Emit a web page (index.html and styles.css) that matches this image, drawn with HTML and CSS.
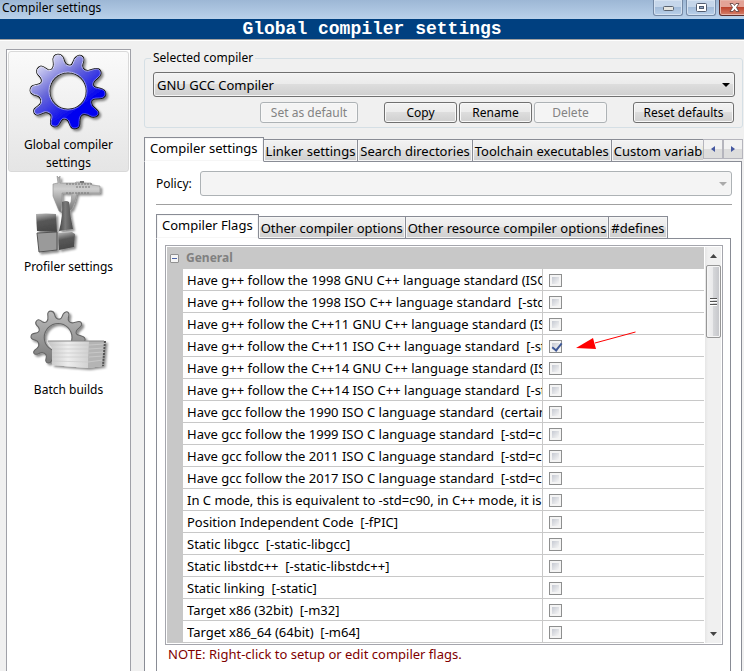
FILE: index.html
```html
<!DOCTYPE html>
<html lang="en">
<head>
<meta charset="utf-8">
<title>Compiler settings</title>
<link rel="stylesheet" href="styles.css">
</head>
<body>
<header class="titlebar">
  <span class="titlebar-text">Compiler settings</span>
  <div class="window-buttons">
    <button class="win" type="button" aria-label="Minimize"><svg width="11" height="7" viewBox="0 0 11 7"><rect x=".5" y="2.5" width="10" height="4" rx="1" fill="#e5e5e0" stroke="#59626f"/></svg></button>
    <button class="win" type="button" aria-label="Maximize"><svg width="11" height="9" viewBox="0 0 11 9"><rect x=".5" y=".5" width="10" height="8" rx="1" fill="#fff" stroke="#525d70"/><rect x="3.5" y="3.5" width="4" height="2" fill="#8fa6c4" stroke="#525d70"/></svg></button>
    <button class="win win-close" type="button" aria-label="Close"><svg width="11" height="9" viewBox="0 0 11 9"><path d="M1 .5h3l1.500 2L7 .5h3L7.500 4.500 10 8.500H7L5.500 6.500 4 8.500H1l2.500-4z" fill="#fff" stroke="#5b3a3a" stroke-width=".8"/></svg></button>
  </div>
</header>
<h1 class="banner">Global compiler settings</h1>
<div class="content">
  <nav class="sidebar">
    <a class="side-item selected" href="#global">
      <svg class="side-icon" width="90" height="84" viewBox="0 4 90 84">
        <defs>
          <linearGradient id="blue" x1=".15" y1=".1" x2=".65" y2=".75"><stop offset="0" stop-color="#dcdcf4"/><stop offset=".45" stop-color="#6a6ad8"/><stop offset="1" stop-color="#0000f0"/></linearGradient>
          <linearGradient id="rim" x1="0" y1="0" x2=".8" y2=".8"><stop offset="0" stop-color="#fff"/><stop offset=".5" stop-color="#c4c4f2"/><stop offset="1" stop-color="#4a4af0"/></linearGradient>
          <path id="cog" d="M30 14C29 9 31 7 34 7S38 8 39 11C40 16 43 18 46 18S49 15 51 11C53 8 56 7 58 9S59 13 58 16C57 20 60 24 65 23C69 22 73 20 75 22S77 27 73 30C69 33 68 36 69 38S72 40 76 41C80 42 81 43 81 46S78 50 74 50C68 50 66 52 67 56C68 60 74 62 74 65S70 69 67 68C62 65 59 65 57 67S55 73 55 76S53 80 50 80S46 76 45 73C43 70 39 69 37 72C35 75 34 79 30 78S27 74 28 69C28 65 23 63 20 64S13 68 11 65S12 60 15 58C20 54 17 48 13 47C8 46 6 44 7 41S9 38 14 37C19 36 19 32 17 29C14 26 12 24 14 21S18 18 23 22C27 24 31 21 30 14ZM44 24A19 19 0 1 0 44 62A19 19 0 1 0 44 24Z"/>
          <filter id="drop" x="-10%" y="-10%" width="130%" height="130%"><feDropShadow dx="2" dy="2" stdDeviation="1" flood-opacity=".45"/></filter>
        </defs>
        <g filter="url(#drop)" fill-rule="evenodd"><use href="#cog" fill="#111" stroke="#111" stroke-width="2.500"/><use href="#cog" fill="url(#blue)" stroke="url(#rim)"/></g>
      </svg>
      <span>Global compiler settings</span>
    </a>
    <a class="side-item" href="#profiler">
      <svg class="side-icon" width="90" height="86" viewBox="0 0 90 86">
        <defs>
          <linearGradient id="dark" x1=".3" y1="0" x2=".5" y2="1"><stop offset="0" stop-color="#b0b0b0"/><stop offset=".4" stop-color="#585858"/><stop offset="1" stop-color="#484848"/></linearGradient>
          <linearGradient id="steel" x1="0" y1="0" x2="0" y2="1"><stop offset="0" stop-color="#a5a5a5"/><stop offset=".35" stop-color="#cfcfcf"/><stop offset="1" stop-color="#6c6c6c"/></linearGradient>
          <linearGradient id="cone"><stop offset="0" stop-color="#444"/><stop offset=".45" stop-color="#7a7a7a"/><stop offset="1" stop-color="#4a4a4a"/></linearGradient>
        </defs>
        <g filter="url(#drop)">
          <path d="M33 4l2 2 1-2v7h15l1-1h6v1h9l1 2 8 1v7H53l-2 8-3 8-3 2-1-3 3-6 1-9H38v7l-1 10 1 3-3-2-4-10-2-5V12l5-1z" fill="url(#steel)" stroke="#8d8d8d" stroke-width=".6"/>
          <path d="M42 12h26M52 15h15M42 21h24" stroke="#777" stroke-dasharray="2 1"/>
          <path d="M56 9h4v2h-4z" fill="#777"/>
          <path d="M38 30q4-2 7 0 1 14 4 27l-14 2q4-15 3-29z" fill="url(#cone)"/>
          <path d="M12 42q10-1 20 0l1 18-20-1z" fill="url(#dark)"/>
          <path d="M13 61l20-1v18l-18 2z" fill="#9a9a9a" stroke="#555"/>
          <path d="M34 61l14-1 3 2-1 13-15 3z" fill="url(#dark)"/>
        </g>
      </svg>
      <span>Profiler settings</span>
    </a>
    <a class="side-item" href="#batch">
      <svg class="side-icon" width="90" height="86" viewBox="0 0 90 86">
        <defs>
          <linearGradient id="gray" x1="0" y1="0" x2="0" y2="1"><stop offset="0" stop-color="#bbb"/><stop offset="1" stop-color="#777"/></linearGradient>
          <linearGradient id="paper"><stop offset="0" stop-color="#c4c4c4"/><stop offset=".5" stop-color="#ededed"/><stop offset="1" stop-color="#d0d0d0"/></linearGradient>
        </defs>
        <g filter="url(#drop)">
          <g transform="translate(2 11) scale(.73)"><use href="#cog" fill="url(#gray)" fill-rule="evenodd" stroke="#666" stroke-width="1.500"/></g>
          <path d="M23 46h42l-1 27-36-3V53z" fill="url(#paper)"/>
          <path d="M65 46h16l-3 25-14 2z" fill="#b4b4b4"/>
          <path d="M24 46h56" stroke="#888"/>
          <path d="M26 50h39M28 54h37M28 58h37M28 62h36M28 66l36 1" stroke="#c8c8c8" stroke-width=".6"/>
          <path d="M65 50l16-1M65 54l15-1M65 58l15-1M65 62l14-1M64 67l15-2" stroke="#d0d0d0" stroke-width=".7"/>
          <path d="M81 46l-2 25" stroke="#555" stroke-width="2" stroke-dasharray="2 1"/>
        </g>
      </svg>
      <span>Batch builds</span>
    </a>
  </nav>
  <main class="main">
    <fieldset class="compiler-box">
      <legend><label for="compiler">Selected compiler</label></legend>
      <div class="select-wrap"><select id="compiler" class="select"><option>GNU GCC Compiler</option></select></div>
      <div class="button-row">
        <button class="btn btn-wide" type="button" disabled>Set as default</button>
        <div class="btn-group">
          <button class="btn" type="button">Copy</button>
          <button class="btn" type="button">Rename</button>
          <button class="btn" type="button" disabled>Delete</button>
        </div>
        <button class="btn btn-reset" type="button">Reset defaults</button>
      </div>
    </fieldset>
    <section class="book">
      <div class="tabbar">
        <div class="tabs" role="tablist">
          <button class="tab active" type="button" role="tab" aria-selected="true">Compiler settings</button>
          <button class="tab" type="button" role="tab">Linker settings</button>
          <button class="tab" type="button" role="tab">Search directories</button>
          <button class="tab" type="button" role="tab">Toolchain executables</button>
          <button class="tab" type="button" role="tab">Custom variables</button>
        </div>
        <div class="tab-scroll">
          <button type="button" aria-label="Scroll tabs left"><svg width="4" height="6" viewBox="0 0 4 6"><path d="M4 0v6L0 3z" fill="#4558a0"/></svg></button>
          <button type="button" aria-label="Scroll tabs right"><svg width="4" height="6" viewBox="0 0 4 6"><path d="M0 0v6l4-3z" fill="#4558a0"/></svg></button>
        </div>
      </div>
      <div class="panel outer-panel">
        <div class="policy-row">
          <label for="policy">Policy:</label>
          <div class="select-wrap off"><select id="policy" class="select" disabled><option></option></select></div>
        </div>
        <hr class="rule">
        <section class="book">
          <div class="tabbar">
            <div class="tabs" role="tablist">
              <button class="tab active" type="button" role="tab" aria-selected="true">Compiler Flags</button>
              <button class="tab" type="button" role="tab">Other compiler options</button>
              <button class="tab" type="button" role="tab">Other resource compiler options</button>
              <button class="tab" type="button" role="tab">#defines</button>
            </div>
          </div>
          <div class="panel inner-panel">
            <div class="grid-box">
              <table class="flags">
                <colgroup><col class="c-margin"><col class="c-name"><col></colgroup>
                <thead><tr><th><button class="collapse" type="button" aria-label="Collapse General"></button></th><th colspan="2">General</th></tr></thead>
                <tbody>
                  <tr><td></td><td><label for="f1">Have g++ follow the 1998 GNU C++ language standard (ISO C++ plus GNU extensions)</label></td><td><input type="checkbox" id="f1"></td></tr>
                  <tr><td></td><td><label for="f2">Have g++ follow the 1998 ISO C++ language standard&nbsp; [-std=c++98]</label></td><td><input type="checkbox" id="f2"></td></tr>
                  <tr><td></td><td><label for="f3">Have g++ follow the C++11 GNU C++ language standard (ISO C++ plus GNU extensions)</label></td><td><input type="checkbox" id="f3"></td></tr>
                  <tr><td></td><td><label for="f4">Have g++ follow the C++11 ISO C++ language standard&nbsp; [-std=c++11]</label></td><td class="marked"><input type="checkbox" id="f4" checked><svg class="pointer" width="62" height="20" viewBox="0 0 62 20"><path d="M60.500 2L20 13" stroke="#f00" fill="none"/><path d="M1 18L18 8l3 11z" fill="#f00"/></svg></td></tr>
                  <tr><td></td><td><label for="f5">Have g++ follow the C++14 GNU C++ language standard (ISO C++ plus GNU extensions)</label></td><td><input type="checkbox" id="f5"></td></tr>
                  <tr><td></td><td><label for="f6">Have g++ follow the C++14 ISO C++ language standard&nbsp; [-std=c++14]</label></td><td><input type="checkbox" id="f6"></td></tr>
                  <tr><td></td><td><label for="f7">Have gcc follow the 1990 ISO C language standard&nbsp; (certain GNU extensions)</label></td><td><input type="checkbox" id="f7"></td></tr>
                  <tr><td></td><td><label for="f8">Have gcc follow the 1999 ISO C language standard&nbsp; [-std=c99]</label></td><td><input type="checkbox" id="f8"></td></tr>
                  <tr><td></td><td><label for="f9">Have gcc follow the 2011 ISO C language standard&nbsp; [-std=c11]</label></td><td><input type="checkbox" id="f9"></td></tr>
                  <tr><td></td><td><label for="f10">Have gcc follow the 2017 ISO C language standard&nbsp; [-std=c17]</label></td><td><input type="checkbox" id="f10"></td></tr>
                  <tr><td></td><td><label for="f11">In C mode, this is equivalent to -std=c90, in C++ mode, it is equivalent to -std=c++98</label></td><td><input type="checkbox" id="f11"></td></tr>
                  <tr><td></td><td><label for="f12">Position Independent Code&nbsp; [-fPIC]</label></td><td><input type="checkbox" id="f12"></td></tr>
                  <tr><td></td><td><label for="f13">Static libgcc&nbsp; [-static-libgcc]</label></td><td><input type="checkbox" id="f13"></td></tr>
                  <tr><td></td><td><label for="f14">Static libstdc++&nbsp; [-static-libstdc++]</label></td><td><input type="checkbox" id="f14"></td></tr>
                  <tr><td></td><td><label for="f15">Static linking&nbsp; [-static]</label></td><td><input type="checkbox" id="f15"></td></tr>
                  <tr><td></td><td><label for="f16">Target x86 (32bit)&nbsp; [-m32]</label></td><td><input type="checkbox" id="f16"></td></tr>
                  <tr><td></td><td><label for="f17">Target x86_64 (64bit)&nbsp; [-m64]</label></td><td><input type="checkbox" id="f17"></td></tr>
                </tbody>
              </table>
              <div class="scrollbar" aria-hidden="true">
                <svg width="7" height="4" viewBox="0 0 7 4"><path d="M0 4l3.500-4L7 4z" fill="#444"/></svg>
                <div class="thumb"><i></i><i></i><i></i></div>
                <svg width="7" height="4" viewBox="0 0 7 4"><path d="M0 0l3.500 4L7 0z" fill="#444"/></svg>
              </div>
            </div>
            <p class="note">NOTE: Right-click to setup or edit compiler flags.</p>
          </div>
        </section>
      </div>
    </section>
  </main>
</div>
</body>
</html>
```
FILE: styles.css
```css
* { box-sizing: border-box; }
body {
  margin: 0;
  height: 100vh;
  overflow: hidden;
  display: flex;
  flex-direction: column;
  background: #f0f0f0;
  color: #000;
  font: 12px/18px "Noto Sans", "Open Sans", sans-serif;
}
button, select { font: inherit; color: inherit; margin: 0; }
.titlebar {
  display: flex;
  justify-content: space-between;
  height: 19px;
  background: linear-gradient(#9db7d5, #b9d1ea);
  flex: none;
}
.titlebar-text { padding-left: 2px; line-height: 16px; }
.window-buttons { display: flex; gap: 3px; height: 16px; margin-right: -5px; }
.win {
  width: 30px;
  padding: 0;
  border: 1px solid #7489a5;
  border-top: 0;
  border-radius: 0 0 3px 3px;
  background: linear-gradient(#c5d6ea 0 45%, #a3bcd9 50%, #b9d0ea);
  box-shadow: inset 0 0 0 1px #d5e2f1;
  display: flex;
  align-items: center;
  justify-content: center;
}
.win-close { border-color: #5c2d2d; background: linear-gradient(#e3a397 0 45%, #bd452f 50%, #d5806b); box-shadow: inset 0 0 0 1px #e6b3a8; }
.banner {
  margin: 0;
  flex: none;
  height: 21px;
  border-bottom: 1px solid #a0a0a0;
  background: #004080;
  color: #fff;
  text-align: center;
  font: bold 18px/20px "Liberation Mono", monospace;
}
.content { flex: 1; min-height: 0; display: flex; gap: 13px; padding: 8px 1px 0 6px; border-top: 1px solid #fff; }
.sidebar {
  flex: none;
  width: 125px;
  padding: 1px;
  border: 1px solid #a0a1a8;
  border-bottom: 0;
  background: #fff;
}
.side-item {
  display: flex;
  flex-direction: column;
  align-items: center;
  height: 123px;
  padding: 0 10px;
  color: #000;
  text-align: center;
  text-decoration: none;
  line-height: 18px;
}
.side-item.selected { height: 121px; border: 1px solid #d9d9d9; border-radius: 3px; background: linear-gradient(#fafafa, #e5e5e5); }
.side-icon { flex: none; }
.main { flex: 1; min-width: 0; display: flex; flex-direction: column; }
.compiler-box {
  margin: 0 0 9px;
  padding: 5px 7px 4px 8px;
  border: 1px solid #d5dfe5;
  border-radius: 3px;
  min-width: 0;
}
.compiler-box legend { padding: 0 2px; margin-left: -2px; }
.select-wrap { display: grid; align-items: center; flex: 1; }
.select-wrap::after {
  content: "";
  grid-area: 1 / 1;
  justify-self: end;
  margin-right: 5px;
  border: 4px solid transparent;
  border-top-color: #000;
  border-bottom: 0;
  pointer-events: none;
}
.select-wrap.off::after { border-top-color: #aaa; }
.select {
  grid-area: 1 / 1;
  appearance: none;
  width: 100%;
  height: 25px;
  padding: 0 3px;
  border: 1px solid #707070;
  border-radius: 3px;
  background: linear-gradient(#f2f2f2, #ebebeb 49%, #dddddd 50%, #cfcfcf);
  box-shadow: inset 0 0 0 1px #f5f5f5;
  font-size: 13px;
}
.select:disabled { border-color: #adb2b5; background: #f4f4f4; opacity: 1; }
.button-row { display: flex; justify-content: flex-end; gap: 26px; padding: 5px 1px 0 0; }
.btn-group { display: flex; gap: 2px; }
.btn {
  width: 73px;
  height: 21px;
  padding: 0;
  line-height: 18px;
  border: 1px solid #707070;
  border-radius: 3px;
  background: linear-gradient(#f2f2f2, #ebebeb 49%, #dddddd 50%, #cfcfcf);
  box-shadow: inset 0 0 0 1px #f8f8f8;
}
.btn:disabled { color: #838383; border-color: #adb2b5; background: #f4f4f4; }
.btn-wide { width: 98px; }
.btn-reset { width: 101px; }
.book { flex: 1; display: flex; flex-direction: column; min-height: 0; }
.tabbar { display: flex; flex: none; }
.tabs { display: flex; align-items: flex-end; overflow: hidden; flex: 1; position: relative; margin-bottom: -1px; }
.tab {
  flex: none;
  height: 23px;
  padding: 0 2px;
  border: 1px solid #898c95;
  border-left-width: 0;
  background: linear-gradient(#f2f2f2, #ebebeb 49%, #dddddd 50%, #cfcfcf);
  box-shadow: inset 0 0 0 1px #f6f6f6;
  font-size: 13px;
  line-height: 20px;
}
.tab.active { height: 25px; padding: 0 5px 3px; border-left-width: 1px; border-bottom-color: #fff; background: #fff; }
.tab-scroll { flex: none; display: flex; align-items: flex-start; padding-top: 2px; }
.tab-scroll button {
  width: 20px;
  height: 20px;
  padding: 0;
  border: 1px solid #b5b5bd;
  background: linear-gradient(#f2f2f2 49%, #dddddd 50%);
  display: flex;
  align-items: center;
  justify-content: center;
}
.panel { flex: 1; min-height: 0; border: 1px solid #898c95; border-bottom: 0; background: #fff; }
.outer-panel { margin-right: 1px; padding: 9px 9px 0 11px; display: flex; flex-direction: column; }
.policy-row { display: flex; align-items: center; gap: 8px; }
.rule { width: 100%; margin: 8px 0 9px; border: 0; border-top: 1px solid #a0a0a0; }
.outer-panel .book { margin-right: 1px; }
.inner-panel { padding: 6px 7px 0 8px; }
.grid-box { display: flex; gap: 1px; padding: 1px; border: 1px solid #a5a6ad; }
.flags { flex: 1; min-width: 0; width: 100%; table-layout: fixed; border-collapse: separate; border-spacing: 0; }
.c-margin { width: 16px; }
.c-name { width: 360px; }
.flags th { height: 22px; padding: 0 3px; background: #c8c8c8; color: #808080; text-align: left; line-height: 18px; }
.flags th:first-child { padding: 0 0 0 3px; }
.flags td { height: 22px; padding: 0 0 0 4px; border-bottom: 1px solid #c8c8c8; font-size: 13px; line-height: 18px; white-space: nowrap; overflow: hidden; }
.flags td:first-child { background: #c8c8c8; }
.flags td:nth-child(2) { border-right: 1px solid #c8c8c8; }
.flags td:last-child { padding: 2px 0 0 6px; }
.flags label { display: block; overflow: hidden; }
.flags input {
  appearance: none;
  display: block;
  width: 13px;
  height: 13px;
  margin: 0;
  border: 1px solid #8e8f8f;
  background: linear-gradient(135deg, #c5c9d2, #f6f6f6) content-box, #f4f4f4;
  padding: 2px;
}
.flags input:checked::after {
  content: "";
  display: block;
  width: 4px;
  height: 8px;
  margin: -2px 0 0 2px;
  border: solid #3e5896;
  border-width: 0 2px 2px 0;
  transform: rotate(38deg);
}
.flags .marked { position: relative; overflow: visible; }
.pointer { position: absolute; left: 32px; top: -5px; }
.collapse {
  display: block;
  width: 9px;
  height: 9px;
  padding: 0;
  border: 1px solid #919191;
  border-radius: 1px;
  background: linear-gradient(#4b63a7, #4b63a7) center / 5px 1px no-repeat, #f5f5f5;
}
.scrollbar {
  flex: none;
  width: 16px;
  display: flex;
  flex-direction: column;
  align-items: center;
  padding: 7px 0;
  background: linear-gradient(90deg, #e6e6e6, #f0f0f0 20%);
}
.scrollbar > svg:last-child { margin-top: auto; }
.thumb {
  width: 15px;
  height: 73px;
  margin-top: 7px;
  border: 1px solid #979797;
  border-radius: 2px;
  background: linear-gradient(90deg, #f3f3f3, #e8e8ea 49%, #d5d6d9 50%, #c4c5c9);
  box-shadow: inset 0 0 0 1px #f5f5f5;
  display: flex;
  flex-direction: column;
  align-items: center;
  justify-content: center;
  gap: 1px;
}
.thumb i { width: 7px; height: 2px; border-top: 1px solid #555; background: #fff; }
.note { margin: 0; padding-left: 3px; color: #800000; font-size: 13px; }
```
